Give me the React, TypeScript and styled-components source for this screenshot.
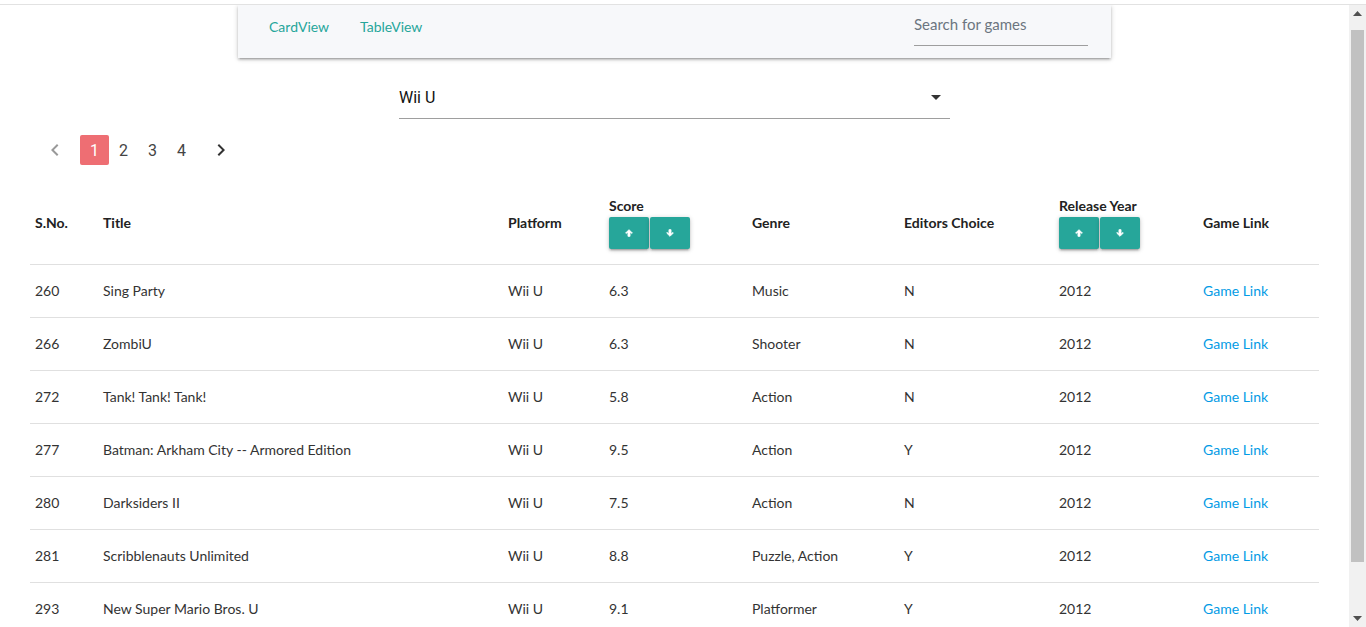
import React from "react";
import styled, { createGlobalStyle } from "styled-components";

const Global = createGlobalStyle`
  html, body { margin: 0; padding: 0; background: #fff; overflow: hidden; }
  body {
    font-family: Lato, "Open Sans", "Liberation Sans", sans-serif;
    color: rgba(0,0,0,0.87);
  }
`;

const Frame = styled.div`
  height: 627px;
  display: flex;
  flex-direction: column;
  padding-top: 4px;
  box-sizing: border-box;
`;

const TopRule = styled.div`
  height: 1px;
  background: #e2e2e2;
  flex: none;
`;

const Viewport = styled.div`
  flex: 1;
  display: flex;
  min-height: 0;
`;

const Main = styled.div`
  flex: 1;
  min-width: 0;
  overflow: hidden;
`;

const ScrollBar = styled.div`
  width: 17px;
  flex: none;
  background: #f1f1f1;
  display: flex;
  flex-direction: column;
  align-items: center;
`;

const ScrollArrow = styled.div`
  height: 17px;
  width: 17px;
  display: flex;
  align-items: center;
  justify-content: center;
  flex: none;
`;

const Thumb = styled.div`
  width: 13px;
  height: 532px;
  margin-top: 8px;
  background: #c1c1c1;
  flex: none;
`;

const Spacer = styled.div`
  flex: 1;
`;

const Navbar = styled.nav`
  width: 873px;
  height: 53px;
  margin: 0 auto;
  box-sizing: border-box;
  background: #f7f8fa;
  display: flex;
  align-items: flex-start;
  padding: 0 23px 0 31px;
  box-shadow: 0 2px 2px 0 rgba(0,0,0,0.14), 0 3px 1px -2px rgba(0,0,0,0.12), 0 1px 5px 0 rgba(0,0,0,0.2);
`;

const NavLinks = styled.div`
  display: flex;
  gap: 31px;
  margin-top: 12px;
  flex: 1;
`;

const NavLink = styled.a`
  color: #26a69a;
  font-size: 14px;
  line-height: 20px;
  text-decoration: none;
`;

const SearchInput = styled.input`
  width: 174px;
  height: 29px;
  margin-top: 4px;
  box-sizing: content-box;
  padding: 0 0 7px 0;
  border: none;
  border-bottom: 1px solid #9e9e9e;
  background: transparent;
  outline: none;
  font-family: Lato, "Open Sans", sans-serif;
  font-size: 15px;
  color: #333;
  &::placeholder { color: #6c7580; }
`;

const SelectBox = styled.div`
  width: 551px;
  height: 34px;
  margin: 22px auto 0;
  box-sizing: content-box;
  padding-bottom: 4px;
  border-bottom: 1px solid #9e9e9e;
  display: flex;
  align-items: center;
  justify-content: space-between;
  font-family: Roboto, "Liberation Sans", sans-serif;
  font-size: 16px;
  color: #111;
`;

const Content = styled.div`
  padding: 0 30px;
`;

const Pagination = styled.ul`
  display: flex;
  align-items: center;
  list-style: none;
  margin: 16px 0 0;
  padding: 0;
  height: 30px;
`;

const PageItem = styled.li<{ $active?: boolean }>`
  width: 29px;
  height: 30px;
  border-radius: 2px;
  display: flex;
  align-items: center;
  justify-content: center;
  font-family: Roboto, "Liberation Sans", sans-serif;
  font-size: 16px;
  color: ${(p) => (p.$active ? "#fff" : "#444")};
  background: ${(p) => (p.$active ? "#ee6e73" : "transparent")};
`;

const Chevron = styled.li<{ $disabled?: boolean }>`
  width: 30px;
  height: 30px;
  margin: 0 10px;
  display: flex;
  align-items: center;
  justify-content: center;
  color: ${(p) => (p.$disabled ? "#999" : "#333")};
`;

const Table = styled.table`
  width: 100%;
  margin-top: 19px;
  border-collapse: collapse;
  table-layout: fixed;
  font-size: 14px;
`;

const HeadCell = styled.th`
  text-align: left;
  font-weight: 700;
  color: #222;
  padding: 13px 5px 15px;
  vertical-align: middle;
  line-height: 18px;
`;

const Row = styled.tr`
  border-bottom: 1px solid #e0e0e0;
`;

const Cell = styled.td`
  padding: 15px 5px;
  line-height: 22px;
  color: #333;
  white-space: nowrap;
`;

const Link = styled.a`
  color: #039be5;
  text-decoration: none;
`;

const SortLabel = styled.div`
  margin-bottom: 2px;
`;

const SortGroup = styled.div`
  display: flex;
  gap: 1px;
`;

const SortButton = styled.button`
  width: 40px;
  height: 32px;
  border: none;
  border-radius: 2px;
  background: #26a69a;
  color: #fff;
  display: flex;
  align-items: center;
  justify-content: center;
  padding: 0;
  box-shadow: 0 2px 2px 0 rgba(0,0,0,0.14), 0 3px 1px -2px rgba(0,0,0,0.12), 0 1px 5px 0 rgba(0,0,0,0.2);
`;

const Arrow = ({ down }: { down?: boolean }) => (
  <svg width="10" height="10" viewBox="0 0 24 24" style={{ transform: down ? "rotate(180deg)" : undefined }}>
    <path fill="currentColor" d="M4 12l1.41 1.41L9.5 9.3V20h5V9.3l4.08 4.11L20 12l-8-8-8 8z" stroke="currentColor" strokeWidth="2" strokeLinejoin="round" />
  </svg>
);

const ChevronIcon = ({ right }: { right?: boolean }) => (
  <svg width="24" height="24" viewBox="0 0 24 24">
    <path
      fill="currentColor"
      d={right ? "M10 6L8.59 7.41 13.17 12l-4.58 4.59L10 18l6-6z" : "M15.41 7.41L14 6l-6 6 6 6 1.41-1.41L10.83 12z"}
    />
  </svg>
);

const Tri = ({ down }: { down?: boolean }) => (
  <svg width="9" height="5" viewBox="0 0 9 5">
    <path fill="#505050" d={down ? "M0 0h9L4.5 5z" : "M4.5 0L9 5H0z"} />
  </svg>
);

const SortHeader = ({ label }: { label: string }) => (
  <div>
    <SortLabel>{label}</SortLabel>
    <SortGroup>
      <SortButton><Arrow /></SortButton>
      <SortButton><Arrow down /></SortButton>
    </SortGroup>
  </div>
);

const rows = [
  ["260", "Sing Party", "6.3", "Music", "N"],
  ["266", "ZombiU", "6.3", "Shooter", "N"],
  ["272", "Tank! Tank! Tank!", "5.8", "Action", "N"],
  ["277", "Batman: Arkham City -- Armored Edition", "9.5", "Action", "Y"],
  ["280", "Darksiders II", "7.5", "Action", "N"],
  ["281", "Scribblenauts Unlimited", "8.8", "Puzzle, Action", "Y"],
  ["293", "New Super Mario Bros. U", "9.1", "Platformer", "Y"],
];

const widths = [68, 405, 101, 143, 152, 155, 144, 121];

export default function App() {
  return (
    <>
      <Global />
      <Frame>
        <TopRule />
        <Viewport>
          <Main>
            <Navbar>
              <NavLinks>
                <NavLink href="#">CardView</NavLink>
                <NavLink href="#">TableView</NavLink>
              </NavLinks>
              <SearchInput placeholder="Search for games" />
            </Navbar>
            <SelectBox>
              <span>Wii U</span>
              <svg width="24" height="24" viewBox="0 0 24 24" style={{ marginRight: 2 }}>
                <path fill="#333" d="M7 10l5 5 5-5z" />
              </svg>
            </SelectBox>
            <Content>
              <Pagination>
                <Chevron $disabled><ChevronIcon /></Chevron>
                <PageItem $active>1</PageItem>
                <PageItem>2</PageItem>
                <PageItem>3</PageItem>
                <PageItem>4</PageItem>
                <Chevron><ChevronIcon right /></Chevron>
              </Pagination>
              <Table>
                <colgroup>
                  {widths.map((w, i) => (
                    <col key={i} style={{ width: w }} />
                  ))}
                </colgroup>
                <thead>
                  <Row>
                    <HeadCell>S.No.</HeadCell>
                    <HeadCell>Title</HeadCell>
                    <HeadCell>Platform</HeadCell>
                    <HeadCell><SortHeader label="Score" /></HeadCell>
                    <HeadCell>Genre</HeadCell>
                    <HeadCell>Editors Choice</HeadCell>
                    <HeadCell><SortHeader label="Release Year" /></HeadCell>
                    <HeadCell>Game Link</HeadCell>
                  </Row>
                </thead>
                <tbody>
                  {rows.map((r) => (
                    <Row key={r[0]}>
                      <Cell>{r[0]}</Cell>
                      <Cell>{r[1]}</Cell>
                      <Cell>Wii U</Cell>
                      <Cell>{r[2]}</Cell>
                      <Cell>{r[3]}</Cell>
                      <Cell>{r[4]}</Cell>
                      <Cell>2012</Cell>
                      <Cell><Link href="#">Game Link</Link></Cell>
                    </Row>
                  ))}
                </tbody>
              </Table>
            </Content>
          </Main>
          <ScrollBar>
            <ScrollArrow><Tri /></ScrollArrow>
            <Thumb />
            <Spacer />
            <ScrollArrow><Tri down /></ScrollArrow>
          </ScrollBar>
        </Viewport>
      </Frame>
    </>
  );
}
